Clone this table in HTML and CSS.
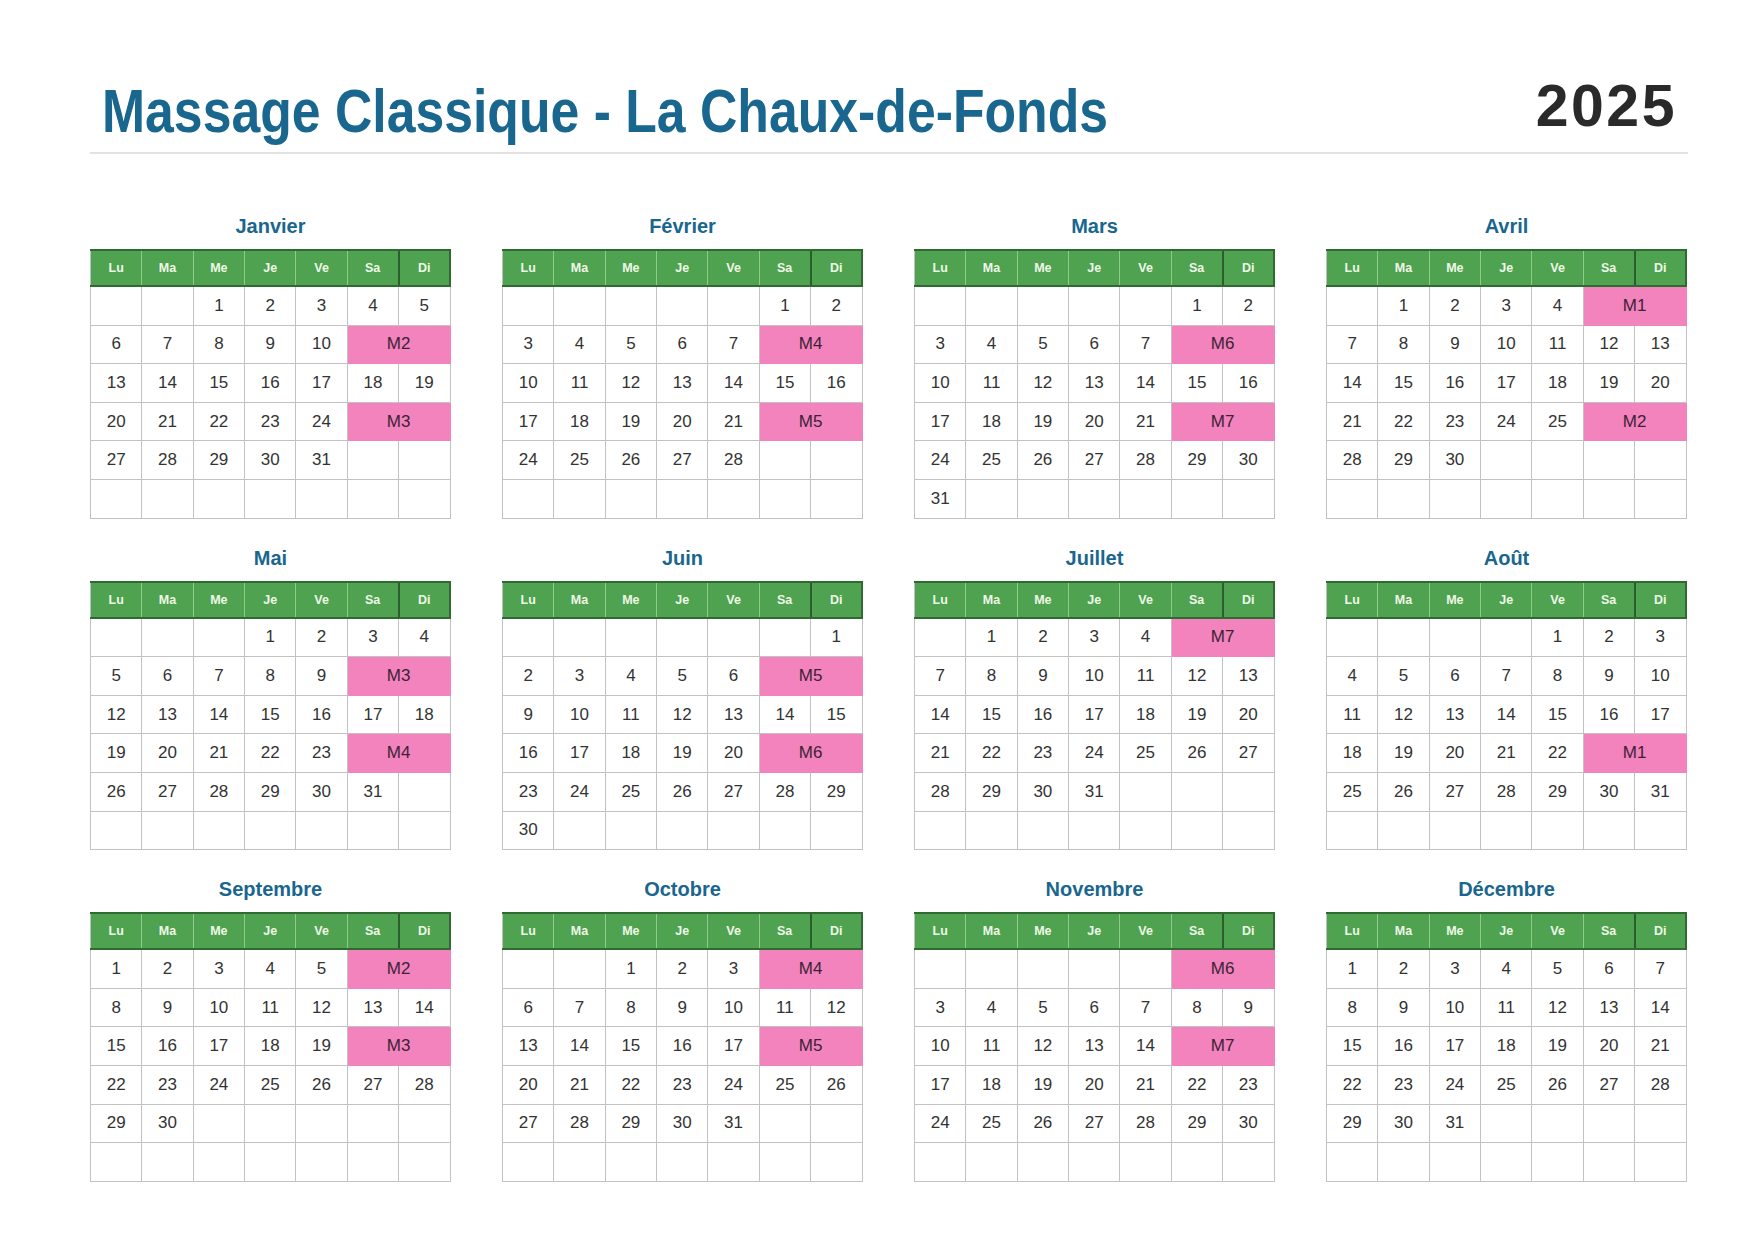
FILE: index.html
```html
<!DOCTYPE html>
<html lang="fr">
<head>
<meta charset="utf-8">
<title>Massage Classique - La Chaux-de-Fonds 2025</title>
<link rel="stylesheet" href="styles.css">
</head>
<body>
<div class="page">
  <header class="head">
    <h1 class="title">Massage Classique - La Chaux-de-Fonds</h1>
    <div class="year">2025</div>
  </header>

  <main class="grid">

    <section class="month">
      <h2>Janvier</h2>
      <table>
        <thead><tr><th>Lu</th><th>Ma</th><th>Me</th><th>Je</th><th>Ve</th><th class="sa">Sa</th><th class="di">Di</th></tr></thead>
        <tbody>
          <tr><td></td><td></td><td>1</td><td>2</td><td>3</td><td>4</td><td>5</td></tr>
          <tr><td>6</td><td>7</td><td>8</td><td>9</td><td>10</td><td class="m" colspan="2">M2</td></tr>
          <tr><td>13</td><td>14</td><td>15</td><td>16</td><td>17</td><td>18</td><td>19</td></tr>
          <tr><td>20</td><td>21</td><td>22</td><td>23</td><td>24</td><td class="m" colspan="2">M3</td></tr>
          <tr><td>27</td><td>28</td><td>29</td><td>30</td><td>31</td><td></td><td></td></tr>
          <tr><td></td><td></td><td></td><td></td><td></td><td></td><td></td></tr>
        </tbody>
      </table>
    </section>

    <section class="month">
      <h2>Février</h2>
      <table>
        <thead><tr><th>Lu</th><th>Ma</th><th>Me</th><th>Je</th><th>Ve</th><th class="sa">Sa</th><th class="di">Di</th></tr></thead>
        <tbody>
          <tr><td></td><td></td><td></td><td></td><td></td><td>1</td><td>2</td></tr>
          <tr><td>3</td><td>4</td><td>5</td><td>6</td><td>7</td><td class="m" colspan="2">M4</td></tr>
          <tr><td>10</td><td>11</td><td>12</td><td>13</td><td>14</td><td>15</td><td>16</td></tr>
          <tr><td>17</td><td>18</td><td>19</td><td>20</td><td>21</td><td class="m" colspan="2">M5</td></tr>
          <tr><td>24</td><td>25</td><td>26</td><td>27</td><td>28</td><td></td><td></td></tr>
          <tr><td></td><td></td><td></td><td></td><td></td><td></td><td></td></tr>
        </tbody>
      </table>
    </section>

    <section class="month">
      <h2>Mars</h2>
      <table>
        <thead><tr><th>Lu</th><th>Ma</th><th>Me</th><th>Je</th><th>Ve</th><th class="sa">Sa</th><th class="di">Di</th></tr></thead>
        <tbody>
          <tr><td></td><td></td><td></td><td></td><td></td><td>1</td><td>2</td></tr>
          <tr><td>3</td><td>4</td><td>5</td><td>6</td><td>7</td><td class="m" colspan="2">M6</td></tr>
          <tr><td>10</td><td>11</td><td>12</td><td>13</td><td>14</td><td>15</td><td>16</td></tr>
          <tr><td>17</td><td>18</td><td>19</td><td>20</td><td>21</td><td class="m" colspan="2">M7</td></tr>
          <tr><td>24</td><td>25</td><td>26</td><td>27</td><td>28</td><td>29</td><td>30</td></tr>
          <tr><td>31</td><td></td><td></td><td></td><td></td><td></td><td></td></tr>
        </tbody>
      </table>
    </section>

    <section class="month">
      <h2>Avril</h2>
      <table>
        <thead><tr><th>Lu</th><th>Ma</th><th>Me</th><th>Je</th><th>Ve</th><th class="sa">Sa</th><th class="di">Di</th></tr></thead>
        <tbody>
          <tr><td></td><td>1</td><td>2</td><td>3</td><td>4</td><td class="m" colspan="2">M1</td></tr>
          <tr><td>7</td><td>8</td><td>9</td><td>10</td><td>11</td><td>12</td><td>13</td></tr>
          <tr><td>14</td><td>15</td><td>16</td><td>17</td><td>18</td><td>19</td><td>20</td></tr>
          <tr><td>21</td><td>22</td><td>23</td><td>24</td><td>25</td><td class="m" colspan="2">M2</td></tr>
          <tr><td>28</td><td>29</td><td>30</td><td></td><td></td><td></td><td></td></tr>
          <tr><td></td><td></td><td></td><td></td><td></td><td></td><td></td></tr>
        </tbody>
      </table>
    </section>

    <section class="month">
      <h2>Mai</h2>
      <table>
        <thead><tr><th>Lu</th><th>Ma</th><th>Me</th><th>Je</th><th>Ve</th><th class="sa">Sa</th><th class="di">Di</th></tr></thead>
        <tbody>
          <tr><td></td><td></td><td></td><td>1</td><td>2</td><td>3</td><td>4</td></tr>
          <tr><td>5</td><td>6</td><td>7</td><td>8</td><td>9</td><td class="m" colspan="2">M3</td></tr>
          <tr><td>12</td><td>13</td><td>14</td><td>15</td><td>16</td><td>17</td><td>18</td></tr>
          <tr><td>19</td><td>20</td><td>21</td><td>22</td><td>23</td><td class="m" colspan="2">M4</td></tr>
          <tr><td>26</td><td>27</td><td>28</td><td>29</td><td>30</td><td>31</td><td></td></tr>
          <tr><td></td><td></td><td></td><td></td><td></td><td></td><td></td></tr>
        </tbody>
      </table>
    </section>

    <section class="month">
      <h2>Juin</h2>
      <table>
        <thead><tr><th>Lu</th><th>Ma</th><th>Me</th><th>Je</th><th>Ve</th><th class="sa">Sa</th><th class="di">Di</th></tr></thead>
        <tbody>
          <tr><td></td><td></td><td></td><td></td><td></td><td></td><td>1</td></tr>
          <tr><td>2</td><td>3</td><td>4</td><td>5</td><td>6</td><td class="m" colspan="2">M5</td></tr>
          <tr><td>9</td><td>10</td><td>11</td><td>12</td><td>13</td><td>14</td><td>15</td></tr>
          <tr><td>16</td><td>17</td><td>18</td><td>19</td><td>20</td><td class="m" colspan="2">M6</td></tr>
          <tr><td>23</td><td>24</td><td>25</td><td>26</td><td>27</td><td>28</td><td>29</td></tr>
          <tr><td>30</td><td></td><td></td><td></td><td></td><td></td><td></td></tr>
        </tbody>
      </table>
    </section>

    <section class="month">
      <h2>Juillet</h2>
      <table>
        <thead><tr><th>Lu</th><th>Ma</th><th>Me</th><th>Je</th><th>Ve</th><th class="sa">Sa</th><th class="di">Di</th></tr></thead>
        <tbody>
          <tr><td></td><td>1</td><td>2</td><td>3</td><td>4</td><td class="m" colspan="2">M7</td></tr>
          <tr><td>7</td><td>8</td><td>9</td><td>10</td><td>11</td><td>12</td><td>13</td></tr>
          <tr><td>14</td><td>15</td><td>16</td><td>17</td><td>18</td><td>19</td><td>20</td></tr>
          <tr><td>21</td><td>22</td><td>23</td><td>24</td><td>25</td><td>26</td><td>27</td></tr>
          <tr><td>28</td><td>29</td><td>30</td><td>31</td><td></td><td></td><td></td></tr>
          <tr><td></td><td></td><td></td><td></td><td></td><td></td><td></td></tr>
        </tbody>
      </table>
    </section>

    <section class="month">
      <h2>Août</h2>
      <table>
        <thead><tr><th>Lu</th><th>Ma</th><th>Me</th><th>Je</th><th>Ve</th><th class="sa">Sa</th><th class="di">Di</th></tr></thead>
        <tbody>
          <tr><td></td><td></td><td></td><td></td><td>1</td><td>2</td><td>3</td></tr>
          <tr><td>4</td><td>5</td><td>6</td><td>7</td><td>8</td><td>9</td><td>10</td></tr>
          <tr><td>11</td><td>12</td><td>13</td><td>14</td><td>15</td><td>16</td><td>17</td></tr>
          <tr><td>18</td><td>19</td><td>20</td><td>21</td><td>22</td><td class="m" colspan="2">M1</td></tr>
          <tr><td>25</td><td>26</td><td>27</td><td>28</td><td>29</td><td>30</td><td>31</td></tr>
          <tr><td></td><td></td><td></td><td></td><td></td><td></td><td></td></tr>
        </tbody>
      </table>
    </section>

    <section class="month">
      <h2>Septembre</h2>
      <table>
        <thead><tr><th>Lu</th><th>Ma</th><th>Me</th><th>Je</th><th>Ve</th><th class="sa">Sa</th><th class="di">Di</th></tr></thead>
        <tbody>
          <tr><td>1</td><td>2</td><td>3</td><td>4</td><td>5</td><td class="m" colspan="2">M2</td></tr>
          <tr><td>8</td><td>9</td><td>10</td><td>11</td><td>12</td><td>13</td><td>14</td></tr>
          <tr><td>15</td><td>16</td><td>17</td><td>18</td><td>19</td><td class="m" colspan="2">M3</td></tr>
          <tr><td>22</td><td>23</td><td>24</td><td>25</td><td>26</td><td>27</td><td>28</td></tr>
          <tr><td>29</td><td>30</td><td></td><td></td><td></td><td></td><td></td></tr>
          <tr><td></td><td></td><td></td><td></td><td></td><td></td><td></td></tr>
        </tbody>
      </table>
    </section>

    <section class="month">
      <h2>Octobre</h2>
      <table>
        <thead><tr><th>Lu</th><th>Ma</th><th>Me</th><th>Je</th><th>Ve</th><th class="sa">Sa</th><th class="di">Di</th></tr></thead>
        <tbody>
          <tr><td></td><td></td><td>1</td><td>2</td><td>3</td><td class="m" colspan="2">M4</td></tr>
          <tr><td>6</td><td>7</td><td>8</td><td>9</td><td>10</td><td>11</td><td>12</td></tr>
          <tr><td>13</td><td>14</td><td>15</td><td>16</td><td>17</td><td class="m" colspan="2">M5</td></tr>
          <tr><td>20</td><td>21</td><td>22</td><td>23</td><td>24</td><td>25</td><td>26</td></tr>
          <tr><td>27</td><td>28</td><td>29</td><td>30</td><td>31</td><td></td><td></td></tr>
          <tr><td></td><td></td><td></td><td></td><td></td><td></td><td></td></tr>
        </tbody>
      </table>
    </section>

    <section class="month">
      <h2>Novembre</h2>
      <table>
        <thead><tr><th>Lu</th><th>Ma</th><th>Me</th><th>Je</th><th>Ve</th><th class="sa">Sa</th><th class="di">Di</th></tr></thead>
        <tbody>
          <tr><td></td><td></td><td></td><td></td><td></td><td class="m" colspan="2">M6</td></tr>
          <tr><td>3</td><td>4</td><td>5</td><td>6</td><td>7</td><td>8</td><td>9</td></tr>
          <tr><td>10</td><td>11</td><td>12</td><td>13</td><td>14</td><td class="m" colspan="2">M7</td></tr>
          <tr><td>17</td><td>18</td><td>19</td><td>20</td><td>21</td><td>22</td><td>23</td></tr>
          <tr><td>24</td><td>25</td><td>26</td><td>27</td><td>28</td><td>29</td><td>30</td></tr>
          <tr><td></td><td></td><td></td><td></td><td></td><td></td><td></td></tr>
        </tbody>
      </table>
    </section>

    <section class="month">
      <h2>Décembre</h2>
      <table>
        <thead><tr><th>Lu</th><th>Ma</th><th>Me</th><th>Je</th><th>Ve</th><th class="sa">Sa</th><th class="di">Di</th></tr></thead>
        <tbody>
          <tr><td>1</td><td>2</td><td>3</td><td>4</td><td>5</td><td>6</td><td>7</td></tr>
          <tr><td>8</td><td>9</td><td>10</td><td>11</td><td>12</td><td>13</td><td>14</td></tr>
          <tr><td>15</td><td>16</td><td>17</td><td>18</td><td>19</td><td>20</td><td>21</td></tr>
          <tr><td>22</td><td>23</td><td>24</td><td>25</td><td>26</td><td>27</td><td>28</td></tr>
          <tr><td>29</td><td>30</td><td>31</td><td></td><td></td><td></td><td></td></tr>
          <tr><td></td><td></td><td></td><td></td><td></td><td></td><td></td></tr>
        </tbody>
      </table>
    </section>

  </main>
</div>
</body>
</html>
```

FILE: styles.css
```css
html, body {
  margin: 0;
  padding: 0;
  background: #ffffff;
}

body {
  font-family: "Liberation Sans", Arial, sans-serif;
  color: #333333;
}

.page {
  padding: 0 67px 0 90px;
}

.head {
  height: 154px;
  box-sizing: border-box;
  display: flex;
  justify-content: space-between;
  align-items: flex-end;
  padding: 0 11px 10px 12px;
  border-bottom: 2px solid #e2e2e2;
}

.title {
  margin: 0;
  font-family: "Liberation Sans", Arial, sans-serif;
  font-weight: 700;
  font-size: 61px;
  line-height: 1;
  color: #19668e;
  transform: scaleX(0.848);
  transform-origin: left center;
  white-space: nowrap;
}

.year {
  font-family: "Liberation Sans", Arial, sans-serif;
  font-weight: 700;
  font-size: 59px;
  line-height: 1;
  letter-spacing: 2.5px;
  color: #2a2a2a;
  margin-bottom: 6px;
}

.grid {
  display: grid;
  grid-template-columns: repeat(4, 361px);
  column-gap: 51px;
  row-gap: 27px;
  margin-top: 60px;
}

.month h2 {
  margin: 0 0 11px;
  font-size: 20px;
  line-height: 24px;
  font-weight: 700;
  text-align: center;
  color: #19668e;
}

.month table {
  width: 361px;
  table-layout: fixed;
  border-collapse: collapse;
}

.month th {
  height: 34px;
  padding: 0;
  background: #4fa24f;
  color: #eef8e8;
  font-size: 12.5px;
  font-weight: 700;
  text-align: center;
  border-top: 2px solid #2f6a31;
  border-bottom: 2px solid #2f6a31;
  border-left: 1px solid #8fcb8c;
  border-right: 1px solid #8fcb8c;
}

.month th:first-child {
  border-left: 1px solid #c2c2c2;
}

.month th.di {
  border-left: 2px solid #2b5e2d;
  border-right: 2px solid #2f6a31;
}

.month td {
  height: 37.6px;
  padding: 0;
  text-align: center;
  font-size: 17px;
  color: #333333;
  border: 1px solid #c2c2c2;
}

.month td.m {
  background: #f283bd;
  border-color: #f283bd;
  color: #3d2236;
}
```
